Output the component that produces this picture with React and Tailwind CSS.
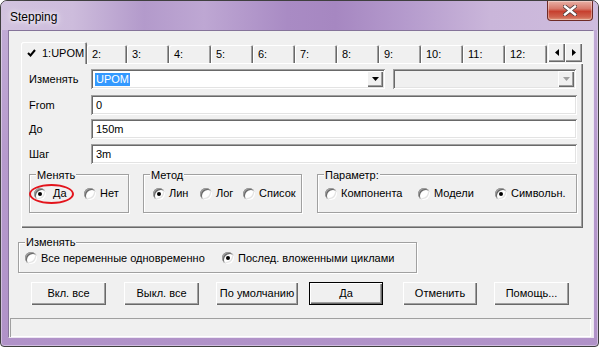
import React from 'react';

// classic 3D edges
const raised = 'bg-[#f0f0f0] shadow-[inset_1px_1px_0_#fff,inset_-1px_-1px_0_#696969,inset_-2px_-2px_0_#a0a0a0]';
const sunken = 'shadow-[inset_1px_1px_0_#a0a0a0,inset_-1px_-1px_0_#fff,inset_2px_2px_0_#696969,inset_-2px_-2px_0_#e3e3e3]';

const Tri = ({ dir = 'down', color = '#000' }) => {
    if (dir === 'down') {
        return (
            <svg width="7" height="4" viewBox="0 0 7 4">
                <path d="M0 0H7L3.5 4Z" fill={color} />
            </svg>
        );
    }
    return (
        <svg width="4" height="7" viewBox="0 0 4 7">
            <path d={dir === 'left' ? 'M4 0V7L0 3.5Z' : 'M0 0V7L4 3.5Z'} fill={color} />
        </svg>
    );
};

const Radio = ({ checked, label, className = '', gap = 'gap-[4px]' }) => (
    <div className={`flex items-center ${gap} ${className}`}>
        <span className="relative w-[12px] h-[12px] shrink-0 rounded-full bg-white shadow-[inset_1px_1px_0_#a0a0a0,inset_-1px_-1px_0_#fff,inset_2px_2px_0_#696969,inset_-2px_-2px_0_#e3e3e3]">
            {checked && <span className="absolute left-[4px] top-[4px] w-[4px] h-[4px] rounded-full bg-black" />}
        </span>
        <span className="whitespace-nowrap">{label}</span>
    </div>
);

const Group = ({ title, className = '', top = '-top-[6px]', children }) => (
    <div className={`relative flex items-center border border-[#a0a0a0] shadow-[1px_1px_0_#fff,inset_1px_1px_0_#fff] ${className}`}>
        <span className={`absolute ${top} left-[6px] px-[1px] bg-[#f0f0f0] whitespace-nowrap`}>{title}</span>
        {children}
    </div>
);

const Combo = ({ width, disabled, children }) => (
    <div className={`${width} h-[20px] flex items-center ${sunken} ${disabled ? 'bg-[#f0f0f0]' : 'bg-white'}`}>
        <div className="flex-1 pl-[5px] flex items-center">{children}</div>
        <div className={`w-[16px] h-[16px] mr-[2px] flex items-center justify-center ${raised}`}>
            <Tri color={disabled ? '#a0a0a0' : '#000'} />
        </div>
    </div>
);

const Edit = ({ value }) => (
    <div className={`w-[486px] h-[20px] flex items-center pl-[5px] bg-white ${sunken}`}>{value}</div>
);

const Btn = ({ label, className = '', isDefault }) => (
    <div
        className={`h-[23px] flex items-center justify-center ${className} ${
            isDefault
                ? 'bg-[#f0f0f0] border border-black shadow-[inset_1px_1px_0_#fff,inset_-1px_-1px_0_#696969,inset_-2px_-2px_0_#a0a0a0]'
                : raised
        }`}
    >
        {label}
    </div>
);

const tabs = ['2:', '3:', '4:', '5:', '6:', '7:', '8:', '9:', '10:', '11:', '12:'];

export default function App() {
    return (
        <div className="w-[601px] h-[348px] bg-white font-['Liberation_Sans',Arial,sans-serif] text-[11px] leading-[13px] text-black">
            <div className="w-[599px] h-[347px] flex flex-col overflow-hidden rounded-t-[7px] rounded-b-[4px] border border-[#3f3f3f] bg-[linear-gradient(180deg,#c3aed7_0%,#b69acd_45%,#b092c8_100%)] shadow-[inset_0_0_0_1px_rgba(255,255,255,0.4)]">

                {/* Title bar */}
                <div className="h-[29px] flex items-start justify-between bg-[linear-gradient(90deg,#d2c3df_0%,#cdbcdc_12%,#b39acb_24%,#bea7d3_34%,#a98bc4_48%,#a687c1_56%,#b59bcd_68%,#cab6da_82%,#cebcdd_100%)]">
                    <span className="pl-[9px] pt-[9px] text-[12px] leading-[14px] [text-shadow:0_0_8px_#fff,0_0_4px_#fff]">Stepping</span>
                    <div className="mr-[5px] w-[46px] h-[20px] flex items-center justify-center rounded-b-[4px] border border-t-0 border-[#6e2a26] bg-[linear-gradient(180deg,#e8b1a6_0%,#d77a6c_40%,#c7402f_55%,#d06450_85%,#df9b7f_100%)] shadow-[inset_0_0_0_1px_rgba(255,255,255,0.35)]">
                        <svg width="14" height="11" viewBox="0 0 14 11">
                            <path d="M2 1.5L12 9.5M12 1.5L2 9.5" stroke="#4a3a3a" strokeWidth="4" strokeLinecap="square" />
                            <path d="M2 1.5L12 9.5M12 1.5L2 9.5" stroke="#fff" strokeWidth="2.4" strokeLinecap="square" />
                        </svg>
                    </div>
                </div>

                {/* Frame around client */}
                <div className="flex-1 flex pl-[7px] pr-[4px] pb-[8px]">
                    <div className="flex-1 flex flex-col bg-[#f0f0f0] border border-t-[#85749a] border-l-[#85749a] border-r-[#ece6f2] border-b-[#ece6f2]">

                        {/* Tab control */}
                        <div className="mt-[11px] ml-[12px] w-[562px] flex flex-col">
                            <div className="h-[21px] flex items-end">
                                <div className="relative z-10 -mb-[1px] w-[66px] h-[22px] flex items-start pt-[5px] pl-[6px] gap-[6px] bg-[#f0f0f0] rounded-t-[2px] shadow-[inset_1px_1px_0_#fff,inset_-1px_0_0_#696969,inset_-2px_0_0_#a0a0a0]">
                                    <svg width="9" height="8" viewBox="0 0 9 8" className="mt-[2px]">
                                        <path d="M1 4L3.5 6.5L8 1" stroke="#000" strokeWidth="2" fill="none" />
                                    </svg>
                                    <span>1:UPOM</span>
                                </div>
                                {tabs.map((t, i) => (
                                    <div
                                        key={t}
                                        className={`${i === 0 ? 'w-[40px]' : 'w-[42px]'} h-[18px] flex items-center pl-[5px] pt-[1px] rounded-t-[2px] shadow-[inset_1px_1px_0_#fff,inset_-1px_0_0_#696969,inset_-2px_0_0_#a0a0a0]`}
                                    >
                                        {t}
                                    </div>
                                ))}
                                <div className="self-start mt-[1px] ml-[1px] flex">
                                    <div className={`w-[17px] h-[19px] flex items-center justify-center ${raised}`}>
                                        <Tri dir="left" />
                                    </div>
                                    <div className={`w-[17px] h-[19px] flex items-center justify-center ${raised}`}>
                                        <Tri dir="right" />
                                    </div>
                                </div>
                            </div>

                            {/* Tab page */}
                            <div className={`h-[165px] pl-[8px] pt-[6px] flex flex-col ${raised}`}>
                                <div className="flex items-center h-[20px]">
                                    <span className="w-[62px]">Изменять</span>
                                    <Combo width="w-[294px]">
                                        <span className="bg-[#3399ff] text-white px-[1px] -ml-[1px]">UPOM</span>
                                    </Combo>
                                    <div className="ml-[8px]">
                                        <Combo width="w-[183px]" disabled />
                                    </div>
                                </div>
                                <div className="mt-[6px] flex items-center h-[20px]">
                                    <span className="w-[62px]">From</span>
                                    <Edit value="0" />
                                </div>
                                <div className="mt-[4px] flex items-center h-[20px]">
                                    <span className="w-[62px]">До</span>
                                    <Edit value="150m" />
                                </div>
                                <div className="mt-[5px] flex items-center h-[20px]">
                                    <span className="w-[62px]">Шаг</span>
                                    <Edit value="3m" />
                                </div>

                                <div className="mt-[10px] flex">
                                    <Group title="Менять" className="w-[100px] h-[39px] pl-[4px]">
                                        <Radio checked label="Да" gap="gap-[7px]" className="w-[50px]" />
                                        <Radio label="Нет" />
                                        <span className="absolute -left-[1px] top-[9px] w-[45px] h-[20px] rounded-[50%] border-2 border-[#e3141c]" />
                                    </Group>
                                    <Group title="Метод" className="ml-[14px] w-[159px] h-[39px] pl-[9px]">
                                        <Radio checked label="Лин" className="w-[47px]" />
                                        <Radio label="Лог" className="w-[43px]" />
                                        <Radio label="Список" />
                                    </Group>
                                    <Group title="Параметр:" className="ml-[15px] w-[260px] h-[39px] pl-[7px]">
                                        <Radio label="Компонента" className="w-[93px]" />
                                        <Radio label="Модели" className="w-[77px]" />
                                        <Radio checked label="Символьн." />
                                    </Group>
                                </div>
                            </div>
                        </div>

                        {/* Iteration mode */}
                        <Group title="Изменять" top="-top-[7px]" className="mt-[14px] ml-[9px] w-[399px] h-[31px] pl-[6px] pt-[1px]">
                            <Radio label="Все переменные одновременно" className="w-[197px]" />
                            <Radio checked label="Послед. вложенными циклами" />
                        </Group>

                        {/* Buttons */}
                        <div className="mt-[9px] flex">
                            <Btn label="Вкл. все" className="ml-[22px] w-[75px]" />
                            <Btn label="Выкл. все" className="ml-[18px] w-[75px]" />
                            <Btn label="По умолчанию" className="ml-[17px] w-[82px]" />
                            <Btn label="Да" isDefault className="ml-[11px] w-[74px]" />
                            <Btn label="Отменить" className="ml-[20px] w-[74px]" />
                            <Btn label="Помощь..." className="ml-[17px] w-[75px]" />
                        </div>

                        {/* Status bar */}
                        <div className="mt-[13px] ml-[1px] w-[581px] h-[19px] shadow-[inset_1px_1px_0_#a0a0a0,inset_-1px_-1px_0_#fff]" />
                    </div>
                </div>
            </div>
        </div>
    );
}
